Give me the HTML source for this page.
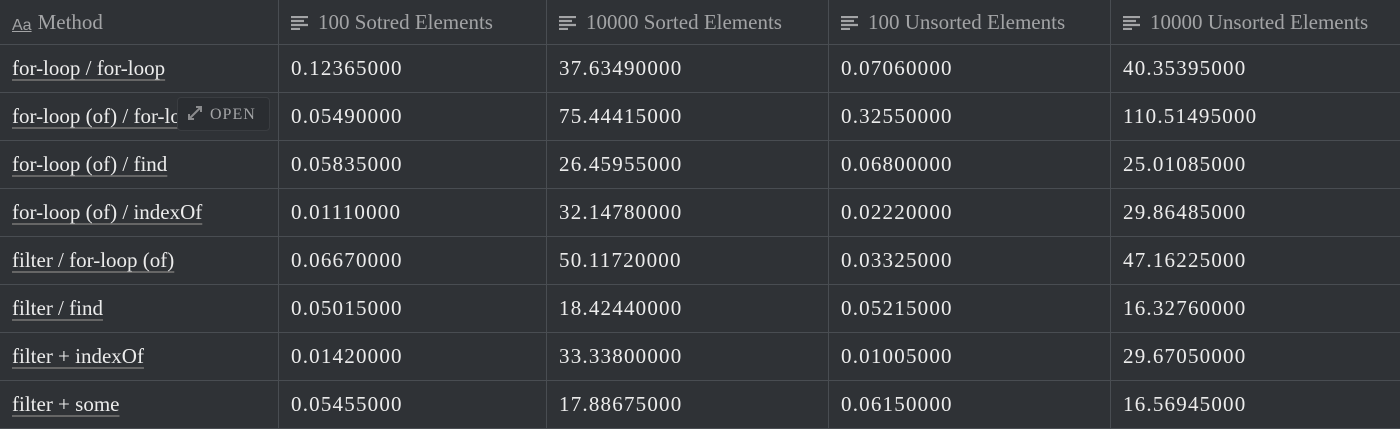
<!DOCTYPE html><html><head><style>
body{margin:0;width:1400px;height:429px;background:#2f3236;overflow:hidden;font-family:"Liberation Serif",serif;color:#ececec}
table{border-collapse:collapse;table-layout:fixed;position:absolute;left:-1px;top:-1px;width:1412px}
td{border:1px solid #494d52;height:47px;padding:0 0 0 12px;font-size:21px;white-space:nowrap;overflow:hidden}
td.n{letter-spacing:1.2px}
tr.h td{height:44px;color:#a3a4a6;font-size:21px}
.m{text-decoration:underline;text-decoration-color:#666;text-underline-offset:4px}
.ic{display:inline-block;vertical-align:-1px;margin-right:10px}
.open{position:absolute;left:177px;top:97px;width:93px;height:34px;background:#2a2d31;border:1px solid #3a3d41;border-radius:4px;color:#a3a4a6;font-size:16px;letter-spacing:1px;line-height:34px;box-sizing:border-box;padding-left:10px}
</style></head><body>
<table>
<colgroup><col style="width:279px"><col style="width:268px"><col style="width:282px"><col style="width:282px"><col style="width:301px"></colgroup>
<tr class="h"><td><span class="ic" style="font-family:'Liberation Sans';font-size:16px;text-decoration:underline;margin-right:6px">Aa</span>Method</td>
<td><svg class="ic" width="17" height="14"><path d="M0 1h17M0 5h13M0 9h17M0 13h9" stroke="#a3a4a6" stroke-width="2.2"/></svg>100 Sotred Elements</td>
<td><svg class="ic" width="17" height="14"><path d="M0 1h17M0 5h13M0 9h17M0 13h9" stroke="#a3a4a6" stroke-width="2.2"/></svg>10000 Sorted Elements</td>
<td><svg class="ic" width="17" height="14"><path d="M0 1h17M0 5h13M0 9h17M0 13h9" stroke="#a3a4a6" stroke-width="2.2"/></svg>100 Unsorted Elements</td>
<td><svg class="ic" width="17" height="14"><path d="M0 1h17M0 5h13M0 9h17M0 13h9" stroke="#a3a4a6" stroke-width="2.2"/></svg>10000 Unsorted Elements</td></tr>
<tr><td><span class="m">for-loop / for-loop</span></td><td class="n">0.12365000</td><td class="n">37.63490000</td><td class="n">0.07060000</td><td class="n">40.35395000</td></tr>
<tr><td><span class="m">for-loop (of) / for-loop</span></td><td class="n">0.05490000</td><td class="n">75.44415000</td><td class="n">0.32550000</td><td class="n">110.51495000</td></tr>
<tr><td><span class="m">for-loop (of) / find</span></td><td class="n">0.05835000</td><td class="n">26.45955000</td><td class="n">0.06800000</td><td class="n">25.01085000</td></tr>
<tr><td><span class="m">for-loop (of) / indexOf</span></td><td class="n">0.01110000</td><td class="n">32.14780000</td><td class="n">0.02220000</td><td class="n">29.86485000</td></tr>
<tr><td><span class="m">filter / for-loop (of)</span></td><td class="n">0.06670000</td><td class="n">50.11720000</td><td class="n">0.03325000</td><td class="n">47.16225000</td></tr>
<tr><td><span class="m">filter / find</span></td><td class="n">0.05015000</td><td class="n">18.42440000</td><td class="n">0.05215000</td><td class="n">16.32760000</td></tr>
<tr><td><span class="m">filter + indexOf</span></td><td class="n">0.01420000</td><td class="n">33.33800000</td><td class="n">0.01005000</td><td class="n">29.67050000</td></tr>
<tr><td><span class="m">filter + some</span></td><td class="n">0.05455000</td><td class="n">17.88675000</td><td class="n">0.06150000</td><td class="n">16.56945000</td></tr>
</table>
<div class="open"><svg width="14" height="14" style="vertical-align:-1px;margin-right:8px"><path d="M1 13L13 1M8 1h5v5M1 8v5h5" stroke="#8a8b8d" stroke-width="2" fill="none"/></svg>OPEN</div>
</body></html>
